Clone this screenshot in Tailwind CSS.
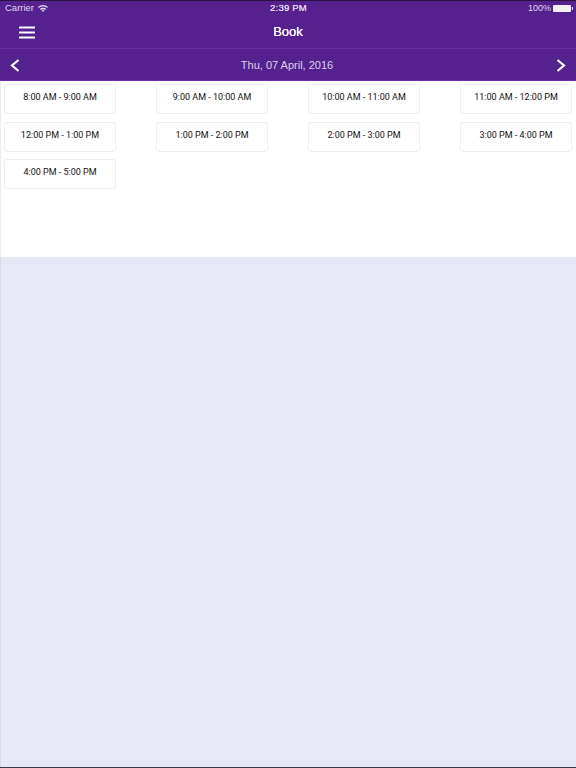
<!DOCTYPE html>
<html>
<head>
<meta charset="utf-8">
<script src="https://cdn.jsdelivr.net/npm/@tailwindcss/browser@4"></script>
</head>
<body class="m-0 bg-[#e6e8f5] font-['Liberation_Sans',sans-serif]">
<div class="flex flex-col w-[576px] h-[768px] overflow-hidden border-t border-b border-t-[#2a1040] border-b-[#3a3a48]">
    <!-- Header -->
    <div class="bg-[#54218f] text-white border-b border-[#6a2fa8]">
        <div class="h-[15px] flex items-center justify-between pl-[5px] pr-[3px] text-[9.5px] text-[#e2d6ef] relative">
            <div class="flex items-center gap-[4px]">
                <span>Carrier</span>
                <svg class="w-[10px] h-[7px]" viewBox="0 0 20 14" fill="currentColor">
                    <path d="M10 0C6 0 3 1.500 0 4l1.800 2C4 4 7 3 10 3s6 1 8.200 3L20 4C17 1.500 14 0 10 0z"/>
                    <path d="M10 5.500c-2.500 0-4.500 1-6.200 2.300l1.800 2C6.800 8.800 8.300 8.300 10 8.300s3.200.5 4.400 1.500l1.800-2C14.500 6.500 12.500 5.500 10 5.500z"/>
                    <path d="M10 10c-1.200 0-2.200.4-3 1l3 3 3-3c-.8-.6-1.800-1-3-1z"/>
                </svg>
            </div>
            <span class="absolute left-0 right-0 text-center pl-[1px] font-medium tracking-[0.2px] [text-shadow:0_0_0.4px_#fff]">2:39 PM</span>
            <div class="flex items-center gap-[2px]">
                <span class="text-[9px]">100%</span>
                <div class="w-[18px] h-[7px] bg-[#f4f0f8] rounded-[1px]"></div>
                <div class="w-[1px] h-[3px] bg-[#e2d6ef] -ml-[1px]"></div>
            </div>
        </div>
        <div class="h-[33px] flex items-center justify-center relative border-b border-[#65309c]">
            <svg class="absolute left-[19px] top-[10px] w-[16px] h-[13px]" viewBox="0 0 16 13" fill="white">
                <rect width="16" height="2" y="0.500" rx="0.500"/>
                <rect width="16" height="2" y="5.500" rx="0.500"/>
                <rect width="16" height="2" y="10.500" rx="0.500"/>
            </svg>
            <span class="text-[13px] [text-shadow:0_0_0.6px_#fff]">Book</span>
        </div>
        <div class="h-[31px] flex items-center justify-between px-[10px] pt-[1px]">
            <svg class="w-[10px] h-[13px]" viewBox="0 0 10 13" fill="none" stroke="white" stroke-width="2.200">
                <path d="M8.500 1L2 6.500l6.500 5.500"/>
            </svg>
            <span class="text-[11px] text-[#ddd0ec] pt-[1px] pr-[2px]">Thu, 07 April, 2016</span>
            <svg class="w-[10px] h-[13px]" viewBox="0 0 10 13" fill="none" stroke="white" stroke-width="2.200">
                <path d="M1.500 1L8 6.500 1.500 12"/>
            </svg>
        </div>
    </div>
    <!-- Slots -->
    <div class="bg-white h-[176px] border-l border-[#eceef2] pt-[3px] pl-[3px]">
        <div class="grid grid-cols-[112px_112px_112px_112px] gap-x-[40px] gap-y-[7.5px] font-['Roboto',sans-serif] text-[9px] text-[#111]">
            <div class="h-[30px] rounded-[3px] border border-[#eeeeee] flex items-center justify-center pb-[2px]">8:00 AM - 9:00 AM</div>
            <div class="h-[30px] rounded-[3px] border border-[#eeeeee] flex items-center justify-center pb-[2px]">9:00 AM - 10:00 AM</div>
            <div class="h-[30px] rounded-[3px] border border-[#eeeeee] flex items-center justify-center pb-[2px]">10:00 AM - 11:00 AM</div>
            <div class="h-[30px] rounded-[3px] border border-[#eeeeee] flex items-center justify-center pb-[2px]">11:00 AM - 12:00 PM</div>
            <div class="h-[30px] rounded-[3px] border border-[#eeeeee] flex items-center justify-center pb-[2px]">12:00 PM - 1:00 PM</div>
            <div class="h-[30px] rounded-[3px] border border-[#eeeeee] flex items-center justify-center pb-[2px]">1:00 PM - 2:00 PM</div>
            <div class="h-[30px] rounded-[3px] border border-[#eeeeee] flex items-center justify-center pb-[2px]">2:00 PM - 3:00 PM</div>
            <div class="h-[30px] rounded-[3px] border border-[#eeeeee] flex items-center justify-center pb-[2px]">3:00 PM - 4:00 PM</div>
            <div class="h-[30px] rounded-[3px] border border-[#eeeeee] flex items-center justify-center pb-[2px]">4:00 PM - 5:00 PM</div>
        </div>
    </div>
    <div class="flex-1 bg-[#e6e8f5] border-l border-[#d8dae6]"></div>
</div>
</body>
</html>
